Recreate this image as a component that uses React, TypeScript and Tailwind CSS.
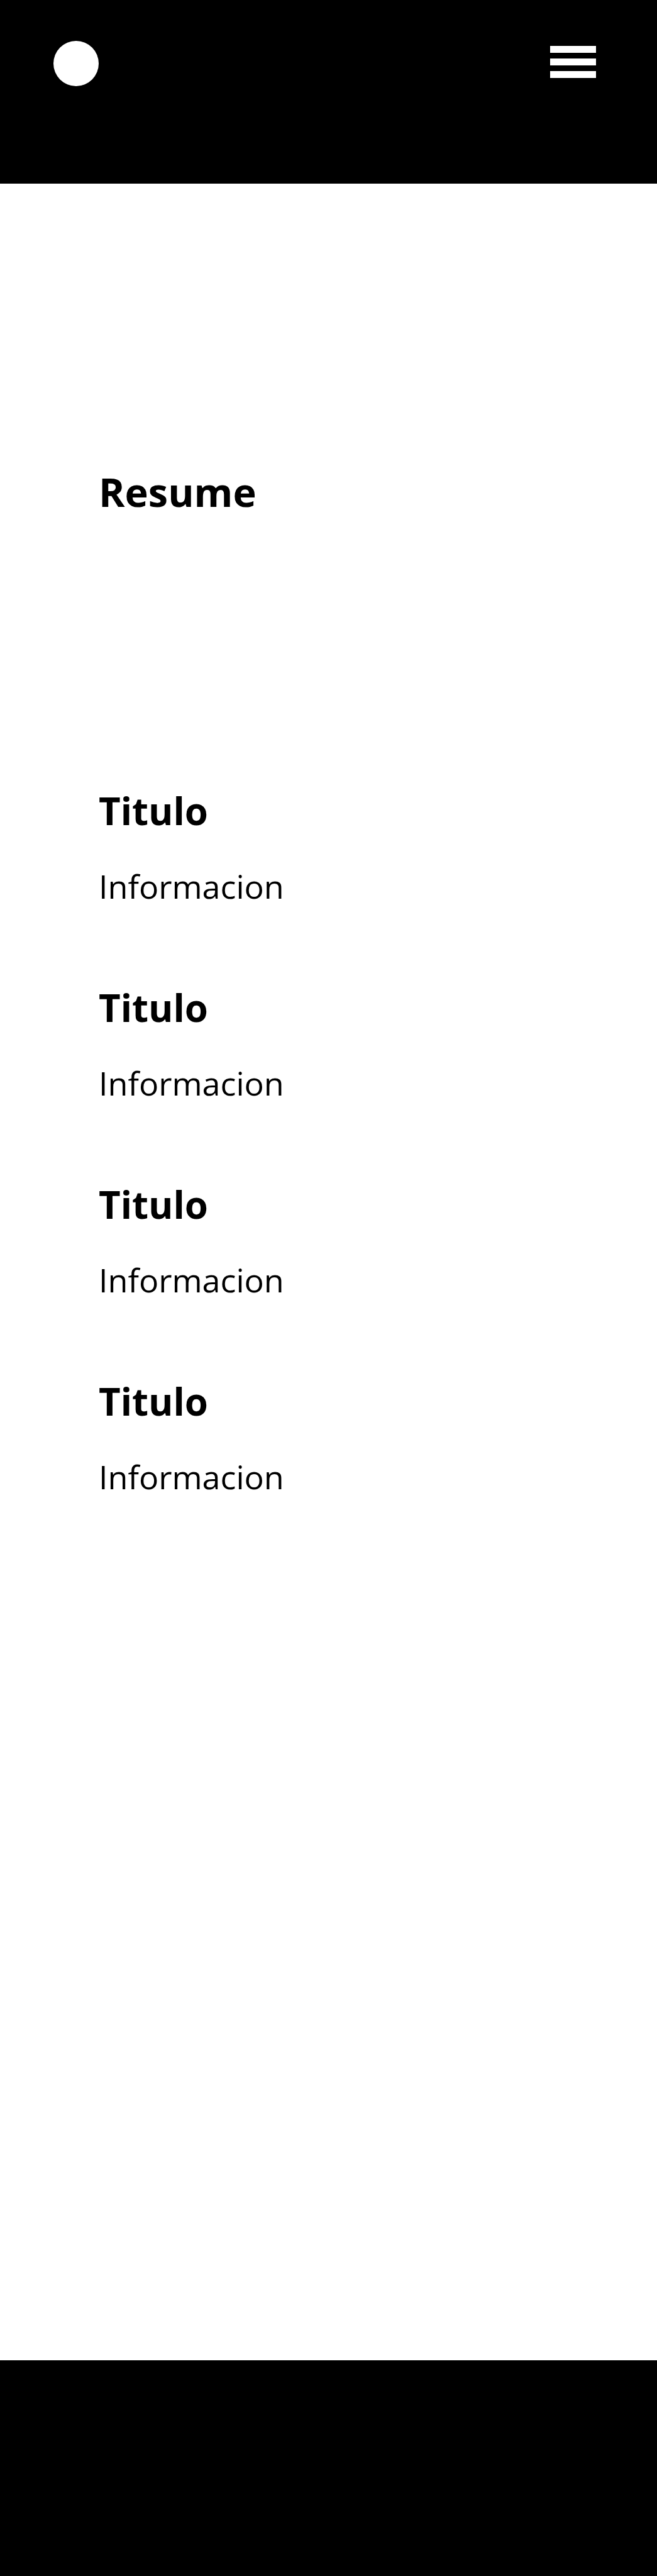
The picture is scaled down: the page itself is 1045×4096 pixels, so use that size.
const entries = [
  { id: 1, title: "Titulo", info: "Informacion" },
  { id: 2, title: "Titulo", info: "Informacion" },
  { id: 3, title: "Titulo", info: "Informacion" },
  { id: 4, title: "Titulo", info: "Informacion" },
];

function Header() {
  return (
    <header className="flex h-[292px] items-start justify-between bg-black pt-[65px] pr-[97px] pl-[85px]">
      <a href="#" aria-label="Home" className="size-[72px] rounded-full bg-white" />
      <button type="button" aria-label="Menu" className="flex w-[73px] flex-col gap-[9px] py-2">
        <span className="h-[11px] w-full bg-white" />
        <span className="h-[11px] w-full bg-white" />
        <span className="h-[11px] w-full bg-white" />
      </button>
    </header>
  );
}

export default function App() {
  return (
    <div className="flex min-h-screen flex-col bg-white font-['Segoe_UI','Open_Sans',sans-serif] text-black">
      <Header />
      <main className="flex-1 px-[157px] pt-[450px] pb-40">
        <h1 className="text-[63px] leading-[80px] font-bold">Resume</h1>
        <div className="mt-[427px] flex flex-col gap-[117px]">
          {entries.map((entry) => (
            <section key={entry.id}>
              <h2 className="text-[60px] leading-[80px] font-bold">{entry.title}</h2>
              <p className="mt-11 text-[52px] leading-[72px]">{entry.info}</p>
            </section>
          ))}
        </div>
      </main>
      <footer className="h-[343px] bg-black" />
    </div>
  );
}
